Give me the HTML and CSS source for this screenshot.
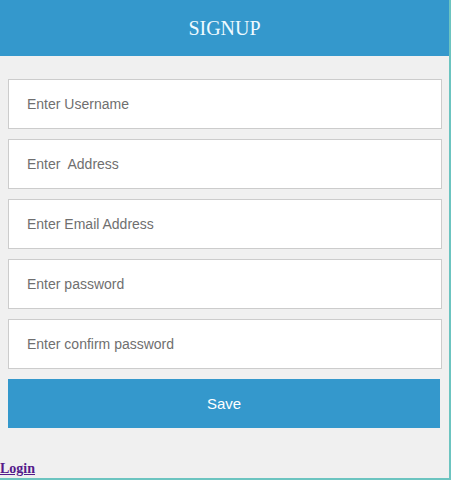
FILE: index.html
```html
<!DOCTYPE html>
<html>
<head>
<meta charset="utf-8">
<link rel="stylesheet" href="styles.css">
</head>
<body>
<div class="panel">
  <div class="header">SIGNUP</div>
  <form class="form">
    <input class="field" type="text" placeholder="Enter Username">
    <input class="field" type="text" placeholder="Enter  Address">
    <input class="field" type="text" placeholder="Enter Email Address">
    <input class="field" type="password" placeholder="Enter password">
    <input class="field" type="password" placeholder="Enter confirm password">
    <button class="save" type="button">Save</button>
  </form>
  <a class="login" href="#">Login</a>
</div>
</body>
</html>
```
FILE: styles.css
```css
html, body {
  margin: 0;
  padding: 0;
}
body {
  background: #6cc4c0;
  width: 451px;
  height: 480px;
  overflow: hidden;
}
.panel {
  width: 449px;
  height: 478px;
  background: #f0f0f0;
  display: flex;
  flex-direction: column;
}
.header {
  height: 56px;
  background: #3498cc;
  color: #eefaff;
  font-family: "Liberation Serif", serif;
  font-size: 20px;
  line-height: 56px;
  text-align: center;
}
.form {
  display: flex;
  flex-direction: column;
  gap: 10px;
  padding: 23px 0 0 8px;
  margin: 0;
}
.field {
  box-sizing: border-box;
  width: 434px;
  height: 50px;
  margin: 0;
  border: 1px solid #cccccc;
  background: #fff;
  padding: 0 18px;
  font-family: "Liberation Sans", Arial, sans-serif;
  font-size: 14px;
  color: #555;
  outline: none;
}
.field::placeholder {
  color: #6f6f6f;
}
.save {
  box-sizing: border-box;
  width: 432px;
  height: 49px;
  margin: 0;
  border: none;
  background: #3498cc;
  color: #fff;
  font-family: "Liberation Sans", Arial, sans-serif;
  font-size: 15px;
}
.login {
  margin-top: 33px;
  align-self: flex-start;
  font-family: "Liberation Serif", serif;
  font-weight: bold;
  font-size: 14px;
  color: #551a8b;
}
```
